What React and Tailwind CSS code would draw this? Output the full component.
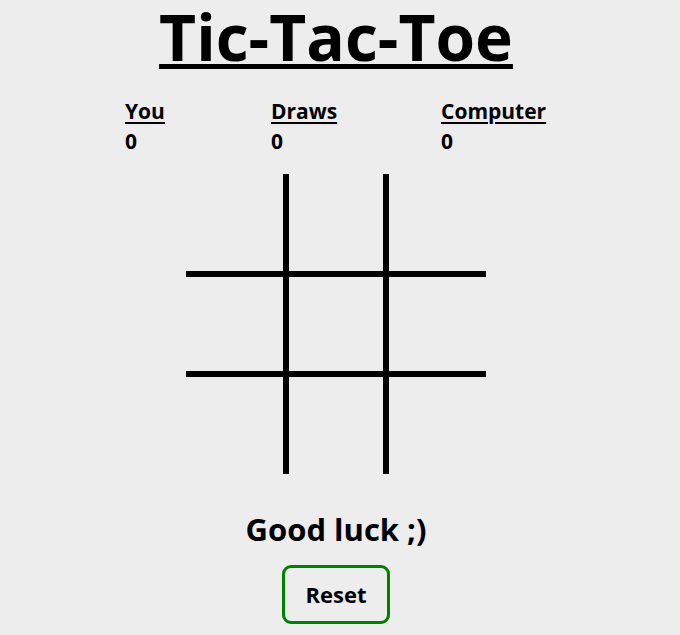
import React, { useState } from "react";

const font = { fontFamily: '"Open Sans", "Noto Sans", sans-serif' };

const borders = [
  "border-r-[3px] border-b-[3px]",
  "border-x-[3px] border-b-[3px]",
  "border-l-[3px] border-b-[3px]",
  "border-r-[3px] border-y-[3px]",
  "border-[3px]",
  "border-l-[3px] border-y-[3px]",
  "border-r-[3px] border-t-[3px]",
  "border-x-[3px] border-t-[3px]",
  "border-l-[3px] border-t-[3px]",
];

const Score = ({ label, value, width }) => (
  <div className={width}>
    <p className="text-[21px] leading-[30px] font-bold underline decoration-2 underline-offset-[3px]">{label}</p>
    <p className="text-[21px] leading-[30px] font-bold">{value}</p>
  </div>
);

export default function App() {
  const [board, setBoard] = useState(Array(9).fill(""));
  const [scores, setScores] = useState({ you: 0, draws: 0, computer: 0 });

  const play = (i) => {
    if (board[i]) return;
    const next = [...board];
    next[i] = "X";
    const free = next.map((v, j) => (v ? null : j)).filter((j) => j !== null);
    if (free.length) next[free[Math.floor(Math.random() * free.length)]] = "O";
    setBoard(next);
  };

  return (
    <div className="min-h-screen bg-[#ededed] text-black" style={font}>
      <div className="w-[672px] flex flex-col items-center">
        <h1 className="pt-[2px] text-[64px] leading-[70px] font-bold underline decoration-[5px] underline-offset-[3px]">
          Tic-Tac-Toe
        </h1>

        <div className="self-start ml-[125px] mt-[24px] flex">
          <Score label="You" value={scores.you} width="w-[146px]" />
          <Score label="Draws" value={scores.draws} width="w-[170px]" />
          <Score label="Computer" value={scores.computer} />
        </div>

        <div className="mt-[18px] grid grid-cols-3 w-[300px]">
          {board.map((cell, i) => (
            <button
              key={i}
              onClick={() => play(i)}
              className={`h-[100px] border-black flex items-center justify-center text-[56px] font-bold ${borders[i]}`}
            >
              {cell}
            </button>
          ))}
        </div>

        <p className="mt-[35px] text-[31px] leading-[40px] font-bold">Good luck ;)</p>

        <button
          onClick={() => {
            setBoard(Array(9).fill(""));
            setScores({ you: 0, draws: 0, computer: 0 });
          }}
          className="mt-[16px] w-[108px] h-[59px] border-[3px] border-[#008000] rounded-[9px] text-[22px] font-bold"
        >
          Reset
        </button>
      </div>
    </div>
  );
}
